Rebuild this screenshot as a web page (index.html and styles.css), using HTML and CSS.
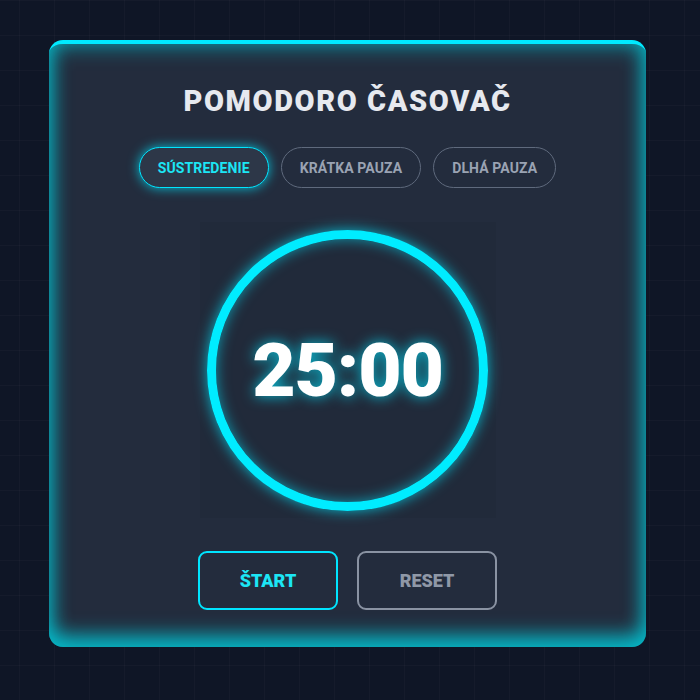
FILE: index.html
```html
<!DOCTYPE html>
<html lang="sk">
<head>
<meta charset="utf-8">
<title>Pomodoro časovač</title>
<link rel="stylesheet" href="styles.css">
</head>
<body>
<main class="page">
  <section class="card">
    <h1 class="title">POMODORO ČASOVAČ</h1>
    <nav class="modes">
      <button class="mode active">SÚSTREDENIE</button>
      <button class="mode">KRÁTKA PAUZA</button>
      <button class="mode">DLHÁ PAUZA</button>
    </nav>
    <div class="timer">
      <div class="ring">
        <span class="time">25:00</span>
      </div>
    </div>
    <div class="controls">
      <button class="btn btn-start">ŠTART</button>
      <button class="btn btn-reset">RESET</button>
    </div>
  </section>
</main>
</body>
</html>
```

FILE: styles.css
```css
* { box-sizing: border-box; }

html, body {
  margin: 0;
  height: 100%;
}

body {
  background-color: #0f1626;
  background-image:
    linear-gradient(rgba(255,255,255,0.025) 1px, transparent 1px),
    linear-gradient(90deg, rgba(255,255,255,0.025) 1px, transparent 1px);
  background-size: 35px 35px;
  background-position: 19px 0;
  font-family: Roboto, "Liberation Sans", sans-serif;
}

.page {
  padding: 40px 0 0 49px;
}

.card {
  width: 597px;
  height: 607px;
  border-top: 4px solid #00eaff;
  border-radius: 14px;
  background: #232c3d;
  box-shadow:
    inset 0 -12px 20px rgba(0, 205, 220, 0.7),
    inset 0 0 22px rgba(0, 205, 220, 0.75);
  padding: 39px 0 0;
  display: flex;
  flex-direction: column;
  align-items: center;
}

.title {
  margin: 0;
  font-size: 29px;
  line-height: 36px;
  font-weight: 900;
  letter-spacing: 1.6px;
  color: #e6e9ef;
  font-family: Roboto, sans-serif;
}

.modes {
  margin-top: 28px;
  display: flex;
  gap: 12px;
}

.mode {
  height: 41px;
  padding: 0 18px;
  border-radius: 21px;
  border: 1.5px solid #5f6a7d;
  background: transparent;
  color: #9aa3b3;
  font-family: Roboto, sans-serif;
  font-weight: 700;
  font-size: 14px;
  letter-spacing: 0.1px;
}

.mode.active {
  border-color: #00e5ff;
  color: #1ce6f5;
  background: #2d3748;
  box-shadow: 0 0 12px rgba(0, 229, 255, 0.8);
}

.timer {
  margin-top: 34px;
  width: 296px;
  height: 296px;
  background: #212a3a;
  display: flex;
  align-items: center;
  justify-content: center;
}

.ring {
  width: 281px;
  height: 281px;
  border-radius: 50%;
  border: 9px solid #00ecff;
  box-shadow:
    0 0 14px rgba(0, 229, 255, 0.75),
    inset 0 0 14px rgba(0, 229, 255, 0.6);
  display: flex;
  align-items: center;
  justify-content: center;
}

.time {
  font-size: 75px;
  font-weight: 900;
  color: #ffffff;
  letter-spacing: -1.2px;
  text-shadow: 0 0 14px rgba(0, 229, 255, 0.8);
}

.controls {
  margin-top: 33px;
  display: flex;
  gap: 19px;
}

.btn {
  width: 140px;
  height: 59px;
  border-radius: 9px;
  background: transparent;
  font-family: Roboto, sans-serif;
  font-weight: 900;
  font-size: 18px;
}

.btn-start {
  border: 2px solid #00e5ff;
  color: #1ce6f5;
}

.btn-reset {
  border: 2px solid #8a93a3;
  color: #8f98a7;
}
```
